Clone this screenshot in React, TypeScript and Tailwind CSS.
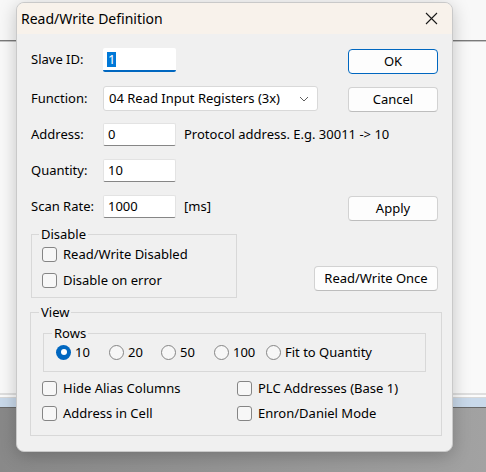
import React from "react";

function Check({ label }: { label: string }) {
  return (
    <div className="flex items-center h-[20px]">
      <span className="w-[15px] h-[15px] rounded-[3px] border border-[#858585] bg-[#f7f7f7] shrink-0" />
      <span className="ml-[6px]">{label}</span>
    </div>
  );
}

function Radio({ label, on, w }: { label: string; on?: boolean; w: string }) {
  return (
    <div className={`flex items-center h-[20px] ${w}`}>
      {on ? (
        <span className="w-[15px] h-[15px] rounded-full bg-[#0067c0] flex items-center justify-center shrink-0">
          <span className="w-[6px] h-[6px] rounded-full bg-white" />
        </span>
      ) : (
        <span className="w-[15px] h-[15px] rounded-full border border-[#858585] bg-[#f7f7f7] shrink-0" />
      )}
      <span className="ml-[4px]">{label}</span>
    </div>
  );
}

function Btn({
  children,
  w = "w-[90px]",
  focus,
}: {
  children: React.ReactNode;
  w?: string;
  focus?: boolean;
}) {
  return (
    <div
      className={`${w} h-[25px] rounded-[4px] bg-[#fdfdfd] border flex items-center justify-center shrink-0 ${
        focus ? "border-[#0067c0]" : "border-[#d2d2d2] border-b-[#bdbdbd]"
      }`}
    >
      {children}
    </div>
  );
}

function Field({ value }: { value: string }) {
  return (
    <div className="w-[73px] h-[23px] bg-white rounded-[2px] border border-[#e3e3e3] border-b-[#868686] flex items-center pl-[4px] shrink-0">
      {value}
    </div>
  );
}

function Label({ children }: { children: React.ReactNode }) {
  return <div className="w-[72px] shrink-0 leading-[23px]">{children}</div>;
}

export default function App() {
  return (
    <div className="relative w-[486px] h-[472px] overflow-hidden font-['Noto_Sans',sans-serif] text-black">
      {/* application window behind the dialog */}
      <div className="flex flex-col h-full">
        <div className="h-[40px] bg-[#f8f8f8]" />
        <div className="h-px bg-[#7a7a7a]" />
        <div className="h-px bg-[#c4c4c4]" />
        <div className="flex-1 bg-[#f9f9f9]" />
        <div className="h-[2px] bg-[#dedede]" />
        <div className="h-[2px] bg-[#fbfbfb]" />
        <div className="h-px bg-[#d8d8d8]" />
        <div className="h-[9px] bg-[#c9d9ea]" />
        <div className="h-px bg-[#686868]" />
        <div className="h-[64px] bg-gradient-to-r from-[#898989] to-[#a2a2a2]" />
      </div>

      {/* dialog window */}
      <div className="absolute left-[16px] top-[2px] w-[437px] h-[450px] rounded-[8px] border border-[#c9c9c9] bg-[#f0f0f0] shadow-[0_4px_18px_rgba(0,0,0,0.22)] overflow-hidden text-[13px] leading-none">
        <div className="h-[31px] bg-[#f8f2eb] flex items-center pl-[4px] pr-[14px]">
          <span className="text-[14px]">Read/Write Definition</span>
          <svg className="ml-auto" width="13" height="13" viewBox="0 0 13 13">
            <path d="M1 1 L12 12 M12 1 L1 12" stroke="#1a1a1a" strokeWidth="1.1" />
          </svg>
        </div>

        <div className="pl-[14px] pr-[14px] flex flex-col">
          {/* Slave ID */}
          <div className="mt-[14px] h-[26px] flex items-start">
            <Label>Slave ID:</Label>
            <div className="w-[73px] h-[24px] bg-white rounded-[2px] border-b-2 border-[#0067c0] flex items-center pl-[4px] shrink-0">
              <span className="bg-[#0078d7] text-white h-[15px] px-px flex items-center">1</span>
            </div>
            <div className="ml-auto mt-[1px]">
              <Btn focus>OK</Btn>
            </div>
          </div>

          {/* Function */}
          <div className="mt-[12px] h-[26px] flex items-start">
            <div className="w-[72px] shrink-0 leading-[25px]">Function:</div>
            <div className="w-[215px] h-[25px] bg-white rounded-[3px] border border-[#d9d9d9] flex items-center pl-[5px] pr-[8px] shrink-0">
              <span>04 Read Input Registers (3x)</span>
              <svg className="ml-auto" width="10" height="6" viewBox="0 0 10 6">
                <path d="M1 1 L5 5 L9 1" fill="none" stroke="#5f5f5f" strokeWidth="1" />
              </svg>
            </div>
            <div className="ml-auto mt-[1px]">
              <Btn>Cancel</Btn>
            </div>
          </div>

          {/* Address */}
          <div className="mt-[11px] h-[26px] flex items-start">
            <Label>Address:</Label>
            <Field value="0" />
            <span className="ml-[8px] leading-[23px]">Protocol address. E.g. 30011 -&gt; 10</span>
          </div>

          {/* Quantity */}
          <div className="mt-[10px] h-[26px] flex items-start">
            <Label>Quantity:</Label>
            <Field value="10" />
          </div>

          {/* Scan rate */}
          <div className="mt-[10px] h-[26px] flex items-start">
            <Label>Scan Rate:</Label>
            <Field value="1000" />
            <span className="ml-[8px] leading-[23px]">[ms]</span>
            <div className="ml-auto mt-[1px]">
              <Btn>Apply</Btn>
            </div>
          </div>

          {/* Disable group */}
          <div className="mt-[5px] flex items-start">
            <fieldset className="w-[206px] border border-[#d8d8d8] p-0">
              <legend className="ml-[7px] px-[2px] leading-[16px]">Disable</legend>
              <div className="pl-[10px] pt-[2px] pb-[7px] flex flex-col gap-[6px]">
                <Check label="Read/Write Disabled" />
                <Check label="Disable on error" />
              </div>
            </fieldset>
            <div className="ml-auto mt-[40px]">
              <Btn w="w-[124px]">Read/Write Once</Btn>
            </div>
          </div>

          {/* View group */}
          <fieldset className="mt-[6px] -ml-px w-[412px] border border-[#d8d8d8] p-0">
            <legend className="ml-[8px] px-[2px] leading-[16px]">View</legend>
            <div className="pl-[12px] pt-[5px] pb-[12px] flex flex-col">
              <fieldset className="w-[383px] border border-[#d8d8d8] p-0">
                <legend className="ml-[8px] px-[2px] leading-[16px]">Rows</legend>
                <div className="pl-[12px] pt-[1px] pb-[9px] flex">
                  <Radio label="10" on w="w-[53px]" />
                  <Radio label="20" w="w-[52px]" />
                  <Radio label="50" w="w-[53px]" />
                  <Radio label="100" w="w-[52px]" />
                  <Radio label="Fit to Quantity" w="w-[130px]" />
                </div>
              </fieldset>
              <div className="mt-[6px] pl-[-1px] grid grid-cols-[195px_1fr] gap-y-[5px] -ml-px">
                <Check label="Hide Alias Columns" />
                <Check label="PLC Addresses (Base 1)" />
                <Check label="Address in Cell" />
                <Check label="Enron/Daniel Mode" />
              </div>
            </div>
          </fieldset>
        </div>
      </div>
    </div>
  );
}
